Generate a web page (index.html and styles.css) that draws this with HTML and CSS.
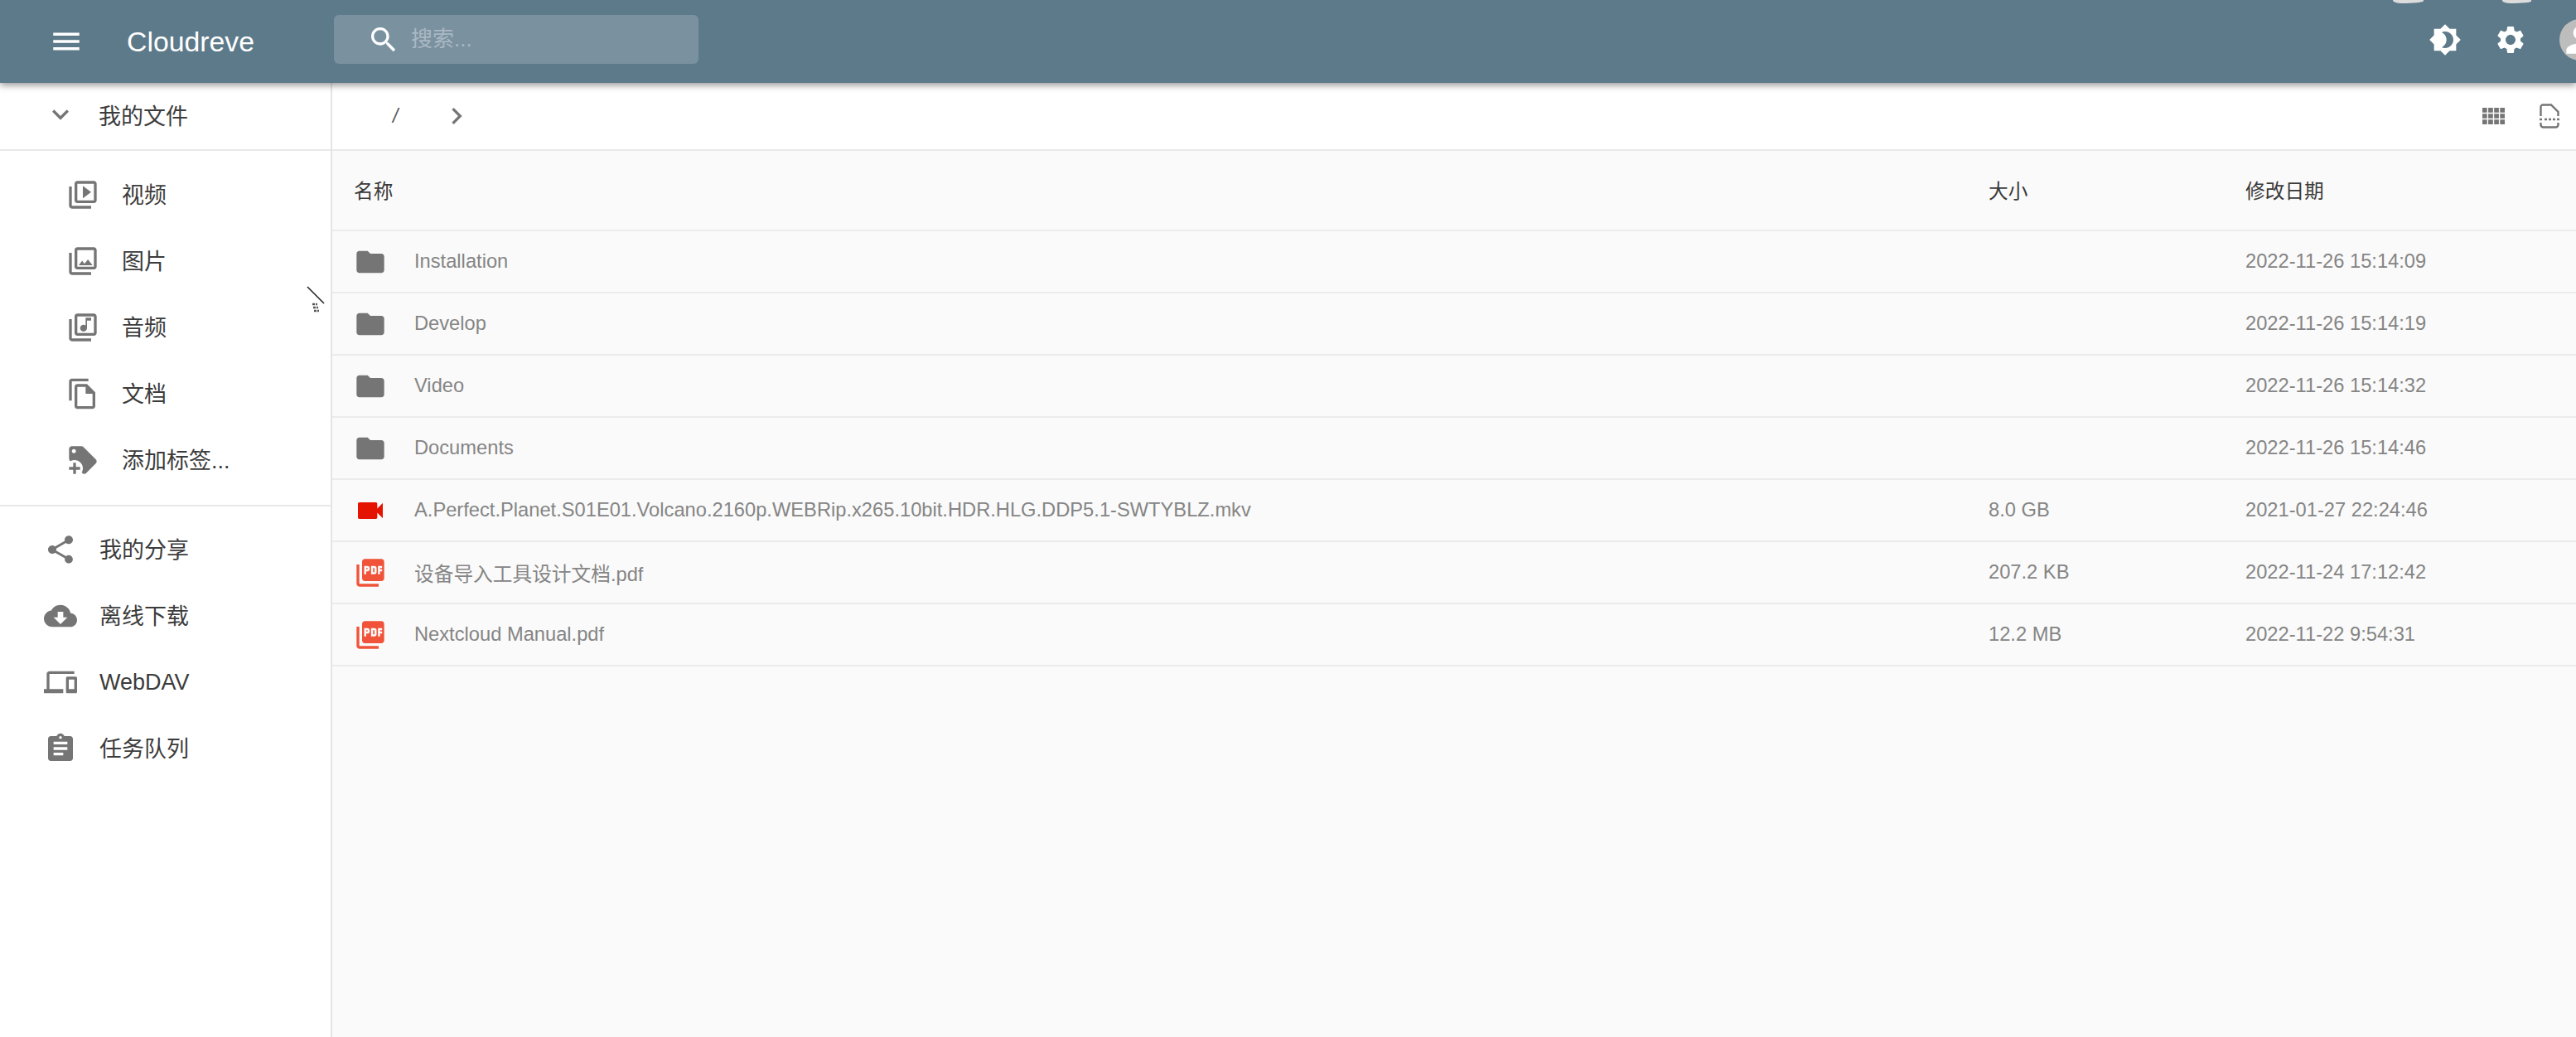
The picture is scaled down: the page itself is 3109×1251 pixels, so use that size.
FILE: index.html
```html
<!DOCTYPE html>
<html lang="zh-CN">
<head>
    <meta charset="UTF-8">
    <title>Cloudreve</title>
    <link rel="stylesheet" href="styles.css">
</head>
<body>
    <svg class="sprite" xmlns="http://www.w3.org/2000/svg">
        <symbol id="i-folder" viewBox="0 0 24 24"><path d="M10 4H4c-1.1 0-1.99.9-1.99 2L2 18c0 1.1.9 2 2 2h16c1.1 0 2-.9 2-2V8c0-1.1-.9-2-2-2h-8l-2-2z"/></symbol>
        <symbol id="i-pdf" viewBox="0 0 24 24"><path d="M20 2H8c-1.1 0-2 .9-2 2v12c0 1.1.9 2 2 2h12c1.1 0 2-.9 2-2V4c0-1.1-.9-2-2-2zm-8.5 7.5c0 .83-.67 1.5-1.5 1.5H9v2H7.5V7H10c.83 0 1.5.67 1.5 1.5v1zm5 2c0 .83-.67 1.5-1.5 1.5h-2.5V7H15c.83 0 1.5.67 1.5 1.5v3zm4-3H19v1h1.5V11H19v2h-1.5V7h3v1.5zM9 9.5h1v-1H9v1zM4 6H2v14c0 1.1.9 2 2 2h14v-2H4V6zm10 5.5h1v-3h-1v3z"/></symbol>
    </svg>
    <div id="app">
        <header class="topbar">
            <span class="scrap scrap-a"></span>
            <span class="scrap scrap-b"></span>
            <svg class="icon menu-icon" viewBox="0 0 24 24"><path d="M3 18h18v-2H3v2zm0-5h18v-2H3v2zm0-7v2h18V6H3z"/></svg>
            <div class="brand">Cloudreve</div>
            <div class="search">
                <svg class="icon" viewBox="0 0 24 24"><path d="M15.5 14h-.79l-.28-.27C15.41 12.59 16 11.11 16 9.5 16 5.91 13.09 3 9.5 3S3 5.91 3 9.5 5.91 16 9.5 16c1.61 0 3.09-.59 4.23-1.57l.27.28v.79l5 4.99L20.49 19l-4.99-5zm-6 0C7.01 14 5 11.99 5 9.5S7.01 5 9.5 5 14 7.01 14 9.5 11.99 14 9.5 14z"/></svg>
                <input type="text" placeholder="搜索...">
            </div>
            <div class="top-actions">
                <svg class="icon" viewBox="0 0 24 24"><path d="M20 8.69V4h-4.69L12 .69 8.69 4H4v4.69L.69 12 4 15.31V20h4.69L12 23.31 15.31 20H20v-4.69L23.31 12 20 8.69zM12 18c-.89 0-1.74-.2-2.5-.55C11.56 16.5 13 14.42 13 12s-1.44-4.5-3.5-5.45C10.26 6.2 11.11 6 12 6c3.31 0 6 2.69 6 6s-2.69 6-6 6z"/></svg>
                <svg class="icon" viewBox="0 0 24 24"><path d="M19.14 12.94c.04-.3.06-.61.06-.94 0-.32-.02-.64-.07-.94l2.03-1.58c.18-.14.23-.41.12-.61l-1.92-3.32c-.12-.22-.37-.29-.59-.22l-2.39.96c-.5-.38-1.03-.7-1.62-.94l-.36-2.54c-.04-.24-.24-.41-.48-.41h-3.84c-.24 0-.43.17-.47.41l-.36 2.54c-.59.24-1.13.57-1.62.94l-2.39-.96c-.22-.08-.47 0-.59.22L2.74 8.87c-.12.21-.08.47.12.61l2.03 1.58c-.05.3-.09.63-.09.94s.02.64.07.94l-2.03 1.58c-.18.14-.23.41-.12.61l1.92 3.32c.12.22.37.29.59.22l2.39-.96c.5.38 1.03.7 1.62.94l.36 2.54c.05.24.24.41.48.41h3.84c.24 0 .44-.17.47-.41l.36-2.54c.59-.24 1.13-.56 1.62-.94l2.39.96c.22.08.47 0 .59-.22l1.92-3.32c.12-.22.07-.47-.12-.61l-2.01-1.58zM12 15.6c-1.98 0-3.6-1.62-3.6-3.6s1.62-3.6 3.6-3.6 3.6 1.62 3.6 3.6-1.62 3.6-3.6 3.6z"/></svg>
                <div class="avatar">
                    <svg viewBox="0 0 24 24"><path d="M12 12c2.21 0 4-1.79 4-4s-1.79-4-4-4-4 1.79-4 4 1.79 4 4 4zm0 2c-2.67 0-8 1.34-8 4v2h16v-2c0-2.66-5.33-4-8-4z"/></svg>
                </div>
            </div>
        </header>
        <div class="layout">
            <aside class="sidebar">
                <div class="nav-head">
                    <svg class="icon" viewBox="0 0 24 24"><path d="M16.59 8.59L12 13.17 7.41 8.59 6 10l6 6 6-6z"/></svg>
                    <span>我的文件</span>
                </div>
                <ul class="nav nav-sub">
                    <li><svg class="icon" viewBox="0 0 24 24"><path d="M4 6H2v14c0 1.1.9 2 2 2h14v-2H4V6zm16-4H8c-1.1 0-2 .9-2 2v12c0 1.1.9 2 2 2h12c1.1 0 2-.9 2-2V4c0-1.1-.9-2-2-2zm0 14H8V4h12v12zM12 5.5v9l6-4.5z"/></svg>视频</li>
                    <li><svg class="icon" viewBox="0 0 24 24"><path d="M20 4v12H8V4h12m0-2H8c-1.1 0-2 .9-2 2v12c0 1.1.9 2 2 2h12c1.1 0 2-.9 2-2V4c0-1.1-.9-2-2-2zm-8.5 9.67l1.69 2.26 2.48-3.1L19 15H9zM2 6v14c0 1.1.9 2 2 2h14v-2H4V6H2z"/></svg>图片</li>
                    <li><svg class="icon" viewBox="0 0 24 24"><path d="M20 2H8c-1.1 0-2 .9-2 2v12c0 1.1.9 2 2 2h12c1.1 0 2-.9 2-2V4c0-1.1-.9-2-2-2zm0 14H8V4h12v12zm-7.5-1c1.38 0 2.5-1.12 2.5-2.5V7h3V5h-4v5.51c-.42-.32-.93-.51-1.5-.51-1.38 0-2.5 1.12-2.5 2.5s1.12 2.5 2.5 2.5zM2 6v14c0 1.1.9 2 2 2h14v-2H4V6H2z"/></svg>音频</li>
                    <li><svg class="icon" viewBox="0 0 24 24"><path d="M16 1H4c-1.1 0-2 .9-2 2v14h2V3h12V1zm-1 4H8c-1.1 0-1.99.9-1.99 2L6 21c0 1.1.89 2 1.99 2H19c1.1 0 2-.9 2-2V11l-6-6zM8 21V7h6v5h5v9H8z"/></svg>文档</li>
                    <li><svg class="icon" viewBox="0 0 24 24"><path d="M21.41 11.58L12.41 2.58C12.05 2.22 11.55 2 11 2H4C2.9 2 2 2.9 2 4V11C2 11.55 2.22 12.05 2.59 12.41L3 12.81C3.9 12.27 4.94 12 6 12C9.31 12 12 14.69 12 18C12 19.06 11.72 20.09 11.18 21L11.58 21.4C11.95 21.78 12.45 22 13 22C13.55 22 14.05 21.78 14.41 21.41L21.41 14.41C21.78 14.05 22 13.55 22 13C22 12.45 21.78 11.95 21.41 11.58M5.5 7C4.67 7 4 6.33 4 5.5S4.67 4 5.5 4 7 4.67 7 5.5 6.33 7 5.5 7M10 19H7V22H5V19H2V17H5V14H7V17H10V19Z"/></svg>添加标签...</li>
                </ul>
                <ul class="nav nav-main">
                    <li><svg class="icon" viewBox="0 0 24 24"><path d="M18 16.08c-.76 0-1.44.3-1.96.77L8.91 12.7c.05-.23.09-.46.09-.7s-.04-.47-.09-.7l7.05-4.11c.54.5 1.25.81 2.04.81 1.66 0 3-1.34 3-3s-1.34-3-3-3-3 1.34-3 3c0 .24.04.47.09.7L8.04 9.81C7.5 9.31 6.79 9 6 9c-1.66 0-3 1.34-3 3s1.34 3 3 3c.79 0 1.5-.31 2.04-.81l7.12 4.16c-.05.21-.08.43-.08.65 0 1.61 1.31 2.92 2.92 2.92 1.61 0 2.92-1.31 2.92-2.92s-1.31-2.92-2.92-2.92z"/></svg>我的分享</li>
                    <li><svg class="icon" viewBox="0 0 24 24"><path d="M19.35 10.04C18.67 6.59 15.64 4 12 4 9.11 4 6.6 5.64 5.35 8.04 2.34 8.36 0 10.91 0 14c0 3.31 2.69 6 6 6h13c2.76 0 5-2.24 5-5 0-2.64-2.05-4.78-4.65-4.96zM17 13l-5 5-5-5h3V9h4v4h3z"/></svg>离线下载</li>
                    <li class="nav-latin"><svg class="icon" viewBox="0 0 24 24"><path d="M4 6h18V4H4c-1.1 0-2 .9-2 2v11H0v3h14v-3H4V6zm19 2h-6c-.55 0-1 .45-1 1v10c0 .55.45 1 1 1h6c.55 0 1-.45 1-1V9c0-.55-.45-1-1-1zm-1 9h-4v-7h4v7z"/></svg>WebDAV</li>
                    <li><svg class="icon" viewBox="0 0 24 24"><path d="M19 3h-4.18C14.4 1.84 13.3 1 12 1c-1.3 0-2.4.84-2.82 2H5c-1.1 0-2 .9-2 2v14c0 1.1.9 2 2 2h14c1.1 0 2-.9 2-2V5c0-1.1-.9-2-2-2zm-7 0c.55 0 1 .45 1 1s-.45 1-1 1-1-.45-1-1 .45-1 1-1zm2 14H7v-2h7v2zm3-4H7v-2h10v2zm0-4H7V7h10v2z"/></svg>任务队列</li>
                </ul>
                <!-- resize pointer resting near the sidebar edge -->
                <svg class="pointer" viewBox="0 0 24 36">
                    <path d="M2 2L22 22" stroke="#222" stroke-width="1.6"/>
                    <path d="M8 23h3M12 23h2M9 27h3M13 27h2M10 31h3M14 31h2" stroke="#555" stroke-width="2.4"/>
                </svg>
            </aside>
            <main class="content">
                <div class="toolbar">
                    <span class="crumb-root">/</span>
                    <svg class="icon" viewBox="0 0 24 24"><path d="M10 6L8.59 7.41 13.17 12l-4.58 4.59L10 18l6-6z"/></svg>
                    <div class="tools">
                        <svg class="tool-grid" viewBox="3 5 19 14"><path d="M3 9h4V5H3v4zm0 5h4v-4H3v4zm5 0h4v-4H8v4zm5 0h4v-4h-4v4zM8 9h4V5H8v4zm5-4v4h4V5h-4zm5 9h4v-4h-4v4zM3 19h4v-4H3v4zm5 0h4v-4H8v4zm5 0h4v-4h-4v4zm5 0h4v-4h-4v4zm0-14v4h4V5h-4z"/></svg>
                        <svg class="tool-doc" viewBox="0 0 24 30">
                            <path d="M1.5 15V4a2.5 2.5 0 0 1 2.5-2.5h10L22.5 10v5" fill="none" stroke="#757575" stroke-width="2.4"/>
                            <path d="M1.5 23v2.5a3 3 0 0 0 3 3h15a3 3 0 0 0 3-3V23" fill="none" stroke="#757575" stroke-width="2.4"/>
                            <path d="M0 19h3M6 19h3M11 19h3M16 19h3M21 19h3" stroke="#757575" stroke-width="2.4"/>
                        </svg>
                    </div>
                </div>
                <div class="file-table">
                    <div class="file-row file-head">
                        <div class="col-name">名称</div>
                        <div>大小</div>
                        <div>修改日期</div>
                    </div>
                    <div class="file-row">
                        <div class="col-name"><svg class="icon"><use href="#i-folder"/></svg>Installation</div>
                        <div></div>
                        <div>2022-11-26 15:14:09</div>
                    </div>
                    <div class="file-row">
                        <div class="col-name"><svg class="icon"><use href="#i-folder"/></svg>Develop</div>
                        <div></div>
                        <div>2022-11-26 15:14:19</div>
                    </div>
                    <div class="file-row">
                        <div class="col-name"><svg class="icon"><use href="#i-folder"/></svg>Video</div>
                        <div></div>
                        <div>2022-11-26 15:14:32</div>
                    </div>
                    <div class="file-row">
                        <div class="col-name"><svg class="icon"><use href="#i-folder"/></svg>Documents</div>
                        <div></div>
                        <div>2022-11-26 15:14:46</div>
                    </div>
                    <div class="file-row">
                        <div class="col-name"><svg class="icon icon-video" viewBox="0 0 24 24"><path d="M17 10.5V7c0-.55-.45-1-1-1H4c-.55 0-1 .45-1 1v10c0 .55.45 1 1 1h12c.55 0 1-.45 1-1v-3.5l4 4v-11l-4 4z"/></svg>A.Perfect.Planet.S01E01.Volcano.2160p.WEBRip.x265.10bit.HDR.HLG.DDP5.1-SWTYBLZ.mkv</div>
                        <div>8.0 GB</div>
                        <div>2021-01-27 22:24:46</div>
                    </div>
                    <div class="file-row">
                        <div class="col-name"><svg class="icon icon-pdf"><use href="#i-pdf"/></svg>设备导入工具设计文档.pdf</div>
                        <div>207.2 KB</div>
                        <div>2022-11-24 17:12:42</div>
                    </div>
                    <div class="file-row">
                        <div class="col-name"><svg class="icon icon-pdf"><use href="#i-pdf"/></svg>Nextcloud Manual.pdf</div>
                        <div>12.2 MB</div>
                        <div>2022-11-22 9:54:31</div>
                    </div>
                </div>
            </main>
        </div>
    </div>
</body>
</html>
```

FILE: styles.css
```css
* {
    box-sizing: border-box;
}

body {
    font-family: "Liberation Sans", "Noto Sans CJK SC", sans-serif;
    margin: 0;
    padding: 0;
    background-color: #fff;
    color: #333;
}

.sprite {
    display: none;
}

#app {
    display: flex;
    flex-direction: column;
    height: 100vh;
    overflow: hidden;
}

.icon {
    flex: none;
    width: 40px;
    height: 40px;
    fill: #757575;
}

/* top bar */
.topbar {
    position: relative;
    z-index: 2;
    flex: none;
    display: flex;
    align-items: center;
    height: 100px;
    padding-left: 59px;
    background-color: #5d7a8a;
    box-shadow: 0 3px 8px rgba(0, 0, 0, 0.4);
    overflow-x: clip;
}

.topbar .icon {
    fill: #fff;
}

.topbar .menu-icon {
    width: 42px;
    height: 42px;
}

.brand {
    margin-left: 52px;
    font-size: 33.8px;
    color: #fff;
}

.search {
    display: flex;
    align-items: center;
    gap: 13px;
    width: 440px;
    height: 59px;
    margin-left: 96px;
    margin-top: -5px;
    padding-left: 40px;
    background-color: #7a91a0;
    border-radius: 6px;
}

.search input {
    flex: 1;
    min-width: 0;
    padding: 0;
    border: none;
    outline: none;
    background: transparent;
    font-family: inherit;
    font-size: 26px;
    color: #fff;
}

.search input::placeholder {
    color: #a9b8c3;
    opacity: 1;
}

.top-actions {
    display: flex;
    align-items: center;
    gap: 39px;
    margin-left: auto;
    margin-right: -30px;
    margin-top: -5px;
}

.avatar {
    width: 50px;
    height: 50px;
    border-radius: 50%;
    background-color: #bdbdbd;
}

.avatar svg {
    display: block;
    width: 50px;
    height: 50px;
    fill: #fff;
}

/* bits of a window edge showing along the very top */
.scrap {
    position: absolute;
    top: 0;
    height: 4px;
    background-color: #dcdcdc;
    border-bottom-left-radius: 12px 4px;
    border-bottom-right-radius: 30px 3px;
}

.scrap-a {
    left: 2888px;
    width: 37px;
}

.scrap-b {
    left: 3020px;
    width: 35px;
}

/* page body */
.layout {
    flex: 1;
    display: flex;
    min-height: 0;
}

.sidebar {
    position: relative;
    flex: none;
    width: 401px;
    background-color: #fff;
    border-right: 2px solid #e4e4e4;
    font-size: 27px;
    color: #3c3c3c;
}

.nav-head {
    display: flex;
    align-items: center;
    gap: 26px;
    height: 82px;
    padding: 0 0 4px 53px;
    border-bottom: 2px solid #e8e8e8;
}

.nav {
    list-style: none;
    margin: 0;
}

/* CJK labels sit a little low in their line box, so lift the row and push the icon back */
.nav li {
    display: flex;
    align-items: center;
    gap: 27px;
    height: 80px;
    padding-bottom: 4px;
}

.nav li .icon {
    margin-top: 4px;
}

.nav .nav-latin {
    padding-bottom: 0;
}

.nav .nav-latin .icon {
    margin-top: 0;
}

.nav-sub {
    padding: 13px 0 14px 80px;
    border-bottom: 2px solid #e8e8e8;
}

.nav-main {
    padding: 12px 0 0 53px;
}

.pointer {
    position: absolute;
    left: 369px;
    top: 244px;
    width: 24px;
    height: 36px;
}

.content {
    flex: 1;
    min-width: 0;
    display: flex;
    flex-direction: column;
    background-color: #fafafa;
}

.toolbar {
    flex: none;
    display: flex;
    align-items: center;
    height: 82px;
    padding: 0 20px 0 73px;
    background-color: #fff;
    border-bottom: 2px solid #e8e8e8;
}

.crumb-root {
    width: 57px;
    font-size: 23px;
    font-style: italic;
    color: #555;
}

.tools {
    display: flex;
    align-items: center;
    gap: 42px;
    margin-left: auto;
}

.tool-grid {
    width: 27px;
    height: 20px;
    fill: #757575;
}

.tool-doc {
    width: 24px;
    height: 30px;
}

/* file list */
.file-row {
    display: grid;
    grid-template-columns: 1fr 310px 399px;
    align-items: center;
    height: 75px;
    font-size: 23.7px;
    color: #858585;
    border-bottom: 2px solid #ebebeb;
}

.file-head {
    height: 97px;
    padding-bottom: 1px;
    color: #3a3a3a;
}

.col-name {
    display: flex;
    align-items: center;
    gap: 33px;
    padding-left: 26px;
}

.icon-video {
    fill: #e51400;
}

.icon-pdf {
    fill: #f1533a;
}
```
